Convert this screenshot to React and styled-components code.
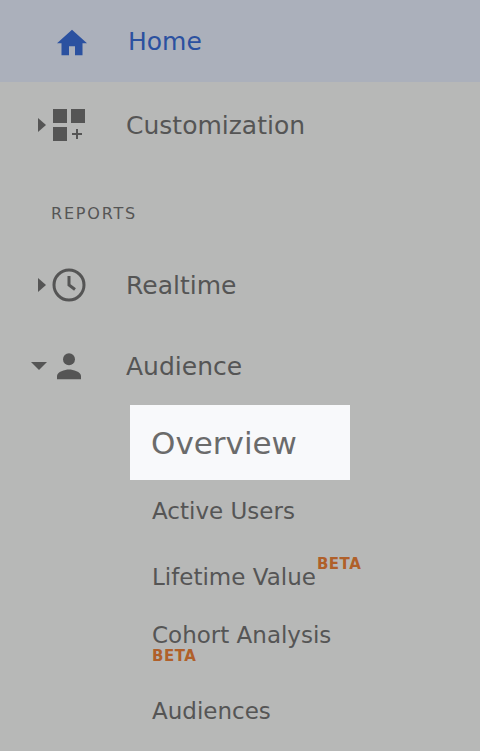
import React from "react";
import styled, { createGlobalStyle } from "styled-components";

const G = createGlobalStyle`
  html,body{margin:0;padding:0;background:#b7b8b7;}
  body{font-family:"DejaVu Sans","Open Sans",sans-serif;}
`;
const Page = styled.div`width:480px;height:751px;overflow:hidden;background:#b7b8b7;`;
const HomeBar = styled.div`
  height:82px;background:#abb0bb;display:flex;align-items:center;
  padding-left:54px;gap:38px;color:#2b51a0;font-size:25px;
`;
const Row = styled.div`
  height:${p => p.h}px;display:flex;align-items:center;color:#555;font-size:25px;
`;
const Caret = styled.div`width:51px;display:flex;justify-content:flex-end;padding-right:3px;box-sizing:border-box;`;
const IconBox = styled.div`width:36px;display:flex;justify-content:center;margin-right:39px;`;
const Section = styled.div`
  height:75px;display:flex;align-items:flex-end;padding-left:51px;padding-bottom:20px;box-sizing:border-box;
  font-size:16px;letter-spacing:1.8px;color:#555;
`;
const Sub = styled.div`padding-left:152px;color:#555;font-size:23px;height:${p=>p.h}px;display:flex;flex-direction:column;justify-content:center;`;
const Active = styled.div`
  margin-left:130px;width:220px;height:75px;background:#f8f9fb;display:flex;align-items:center;
  padding-left:21px;box-sizing:border-box;color:#6b6b6b;font-size:31px;
`;
const Beta = styled.span`color:#b0602a;font-size:15px;font-weight:700;letter-spacing:0.5px;line-height:1;`;
const Sup = styled(Beta)`position:relative;top:-16px;margin-left:1px;`;
const Line = styled.div`line-height:28px;`;

const Right = () => <svg width="12" height="16" viewBox="0 0 12 16"><path d="M2 1l8 7-8 7z" fill="#555"/></svg>;
const Down = () => <svg width="18" height="12" viewBox="0 0 18 12"><path d="M1 2h16l-8 8z" fill="#555"/></svg>;

export default function App(){
  return (<Page><G/>
    <HomeBar>
      <svg width="36" height="32" viewBox="0 0 24 21"><path d="M10 20v-6h4v6h5v-8h3L12 3 2 12h3v8z" fill="#2b51a0"/></svg>
      <span>Home</span>
    </HomeBar>
    <Row h={86}><Caret><Right/></Caret>
      <IconBox><svg width="34" height="34" viewBox="0 0 34 34" fill="#555"><rect x="1" y="1" width="14" height="14"/><rect x="19" y="1" width="14" height="14"/><rect x="1" y="19" width="14" height="14"/><path d="M24 21h2v4h4v2h-4v4h-2v-4h-4v-2h4z"/></svg></IconBox>
      <span>Customization</span></Row>
    <Section>REPORTS</Section>
    <Row h={84}><Caret><Right/></Caret>
      <IconBox><svg width="36" height="36" viewBox="0 0 24 24"><circle cx="12" cy="12" r="10" fill="none" stroke="#555" strokeWidth="2"/><path d="M12 6v6l4 3" fill="none" stroke="#555" strokeWidth="2"/></svg></IconBox>
      <span>Realtime</span></Row>
    <Row h={78}><Caret><Down/></Caret>
      <IconBox><svg width="32" height="32" viewBox="0 0 24 24" fill="#555"><circle cx="12" cy="7" r="4.5"/><path d="M3 22v-2.5c0-3 6-4.8 9-4.8s9 1.8 9 4.8V22z"/></svg></IconBox>
      <span>Audience</span></Row>
    <Active>Overview</Active>
    <Sub h={62}>Active Users</Sub>
    <Sub h={70}><div>Lifetime Value<Sup>BETA</Sup></div></Sub>
    <Sub h={60}><Line>Cohort Analysis</Line><Beta>BETA</Beta></Sub>
    <Sub h={78}>Audiences</Sub>
  </Page>);
}
